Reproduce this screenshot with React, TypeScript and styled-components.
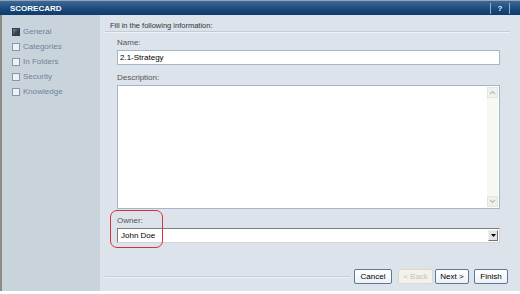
import React from "react";
import styled, { createGlobalStyle } from "styled-components";

const GlobalStyle = createGlobalStyle`
  html, body {
    margin: 0;
    padding: 0;
    background: #ffffff;
  }
  body {
    width: 520px;
    height: 294px;
    overflow: hidden;
    font-family: "Liberation Sans", Arial, sans-serif;
  }
`;

const Frame = styled.div`
  width: 520px;
  height: 291px;
  display: flex;
  flex-direction: column;
  font-size: 8px;
`;

const TitleBar = styled.div`
  height: 15px;
  box-sizing: border-box;
  border-top: 1px solid #9aa4ae;
  background: linear-gradient(#3d6a98, #1b4a7c 55%, #0f3b6a);
  display: flex;
  align-items: center;
  padding-left: 10px;
  padding-right: 10px;
`;

const TitleText = styled.span`
  color: #ffffff;
  font-weight: bold;
  font-size: 8px;
  flex: 1;
`;

const HelpBox = styled.div`
  display: flex;
  align-items: center;
  height: 11px;
  border-left: 1px solid #8fb0d0;
  border-right: 1px solid #8fb0d0;
  width: 18px;
  justify-content: center;
  color: #e8f0f8;
  font-weight: bold;
  font-size: 8px;
`;

const Body = styled.div`
  flex: 1;
  display: flex;
`;

const Sidebar = styled.div`
  width: 98px;
  border-left: 2px solid #8c8c84;
  background: #c9d3dc;
  padding-top: 9px;
`;

const NavItem = styled.div`
  height: 15px;
  display: flex;
  align-items: center;
  padding-left: 10px;
  color: #6f8399;
`;

const NavBox = styled.span<{ $active?: boolean }>`
  width: 6px;
  height: 6px;
  margin-right: 3px;
  border: 1px solid ${(p) => (p.$active ? "#2d3c4e" : "#8797a8")};
  background: ${(p) =>
    p.$active ? "linear-gradient(135deg, #7a8ca0, #2f4259 60%)" : "#eef2f6"};
`;

const Main = styled.div`
  flex: 1;
  background: #dce3ea;
  display: flex;
  flex-direction: column;
  position: relative;
`;

const Intro = styled.div`
  margin: 0 10px 0 5px;
  padding: 5px 0 0 5px;
  height: 11px;
  line-height: 11px;
  font-size: 7.5px;
  color: #333;
  border-bottom: 1px solid #c4cdd7;
  box-shadow: 0 1px 0 #eef2f6;
`;

const Form = styled.div`
  margin-left: 17px;
  width: 383px;
  display: flex;
  flex-direction: column;
`;

const Label = styled.div<{ $top: number }>`
  margin-top: ${(p) => p.$top}px;
  height: 10px;
  line-height: 10px;
  color: #555;
  margin-bottom: 2px;
`;

const TextInput = styled.div`
  height: 15px;
  box-sizing: border-box;
  border: 1px solid #a6b6c8;
  background: #fff;
  padding-left: 2px;
  line-height: 13px;
  color: #000;
`;

const TextArea = styled.div`
  height: 124px;
  box-sizing: border-box;
  border: 1px solid #a6b6c8;
  background: #fff;
  display: flex;
  justify-content: flex-end;
`;

const ScrollTrack = styled.div`
  width: 11px;
  margin: 1px 1px 1px 0;
  background: #f7f8f4;
  display: flex;
  flex-direction: column;
  justify-content: space-between;
`;

const ScrollBtn = styled.div`
  width: 11px;
  height: 11px;
  box-sizing: border-box;
  border: 1px solid #e2e6e0;
  background: #eff1ec;
  display: flex;
  align-items: center;
  justify-content: center;
`;

const Select = styled.div`
  height: 15px;
  box-sizing: border-box;
  border-top: 1px solid #7d7d7d;
  border-left: 1px solid #7d7d7d;
  border-right: 1px solid #d4d4d4;
  border-bottom: 1px solid #d4d4d4;
  background: #fff;
  display: flex;
  align-items: center;
  padding-left: 3px;
  color: #000;
`;

const SelectText = styled.span`
  flex: 1;
`;

const ArrowBtn = styled.div`
  width: 10px;
  height: 11px;
  margin-right: 1px;
  box-sizing: border-box;
  border-top: 1px solid #f0f0f0;
  border-left: 1px solid #f0f0f0;
  border-right: 1px solid #707070;
  border-bottom: 1px solid #707070;
  background: #e4e4e4;
  display: flex;
  align-items: center;
  justify-content: center;
`;

const Highlight = styled.div`
  position: absolute;
  left: 10px;
  top: 195px;
  width: 51px;
  height: 36px;
  border: 1.5px solid #d2343a;
  border-radius: 7px;
`;

const Footer = styled.div`
  margin-top: auto;
  margin-bottom: 7px;
  display: flex;
  align-items: center;
  padding-left: 5px;
  padding-right: 12px;
`;

const FooterLine = styled.div`
  flex: 1;
  height: 0;
  border-top: 1px solid #c4cdd7;
  border-bottom: 1px solid #eef2f6;
  margin-right: 4px;
`;

const Button = styled.div<{ $w: number; $gap: number; $disabled?: boolean }>`
  width: ${(p) => p.$w}px;
  height: 15px;
  margin-left: ${(p) => p.$gap}px;
  box-sizing: border-box;
  border: 1px solid ${(p) => (p.$disabled ? "#dadbd0" : "#5b7a9a")};
  border-radius: 2px;
  background: ${(p) =>
    p.$disabled ? "#f2f2ea" : "linear-gradient(#ffffff, #edf1f5)"};
  color: ${(p) => (p.$disabled ? "#c2c4bc" : "#000")};
  font-size: 8px;
  display: flex;
  align-items: center;
  justify-content: center;
`;

const navItems = ["General", "Categories", "In Folders", "Security", "Knowledge"];

function Chevron({ down }: { down?: boolean }) {
  return (
    <svg width="7" height="5" viewBox="0 0 7 5">
      <polyline
        points={down ? "1,1 3.5,3.5 6,1" : "1,4 3.5,1.5 6,4"}
        fill="none"
        stroke="#b8beb4"
        strokeWidth="1.2"
      />
    </svg>
  );
}

function App() {
  return (
    <>
      <GlobalStyle />
      <Frame>
        <TitleBar>
          <TitleText>SCORECARD</TitleText>
          <HelpBox>?</HelpBox>
        </TitleBar>
        <Body>
          <Sidebar>
            {navItems.map((item, i) => (
              <NavItem key={item}>
                <NavBox $active={i === 0} />
                {item}
              </NavItem>
            ))}
          </Sidebar>
          <Main>
            <Intro>Fill in the following information:</Intro>
            <Form>
              <Label $top={6}>Name:</Label>
              <TextInput>2.1-Strategy</TextInput>
              <Label $top={8}>Description:</Label>
              <TextArea>
                <ScrollTrack>
                  <ScrollBtn>
                    <Chevron />
                  </ScrollBtn>
                  <ScrollBtn>
                    <Chevron down />
                  </ScrollBtn>
                </ScrollTrack>
              </TextArea>
              <Label $top={7}>Owner:</Label>
              <Select>
                <SelectText>John Doe</SelectText>
                <ArrowBtn>
                  <svg width="5" height="3" viewBox="0 0 5 3">
                    <polygon points="0,0 5,0 2.5,3" fill="#000" />
                  </svg>
                </ArrowBtn>
              </Select>
            </Form>
            <Highlight />
            <Footer>
              <FooterLine />
              <Button $w={38} $gap={0}>Cancel</Button>
              <Button $w={35} $gap={6} $disabled>
                &lt; Back
              </Button>
              <Button $w={34} $gap={2}>Next &gt;</Button>
              <Button $w={34} $gap={5}>Finish</Button>
            </Footer>
          </Main>
        </Body>
      </Frame>
    </>
  );
}

export default App;
